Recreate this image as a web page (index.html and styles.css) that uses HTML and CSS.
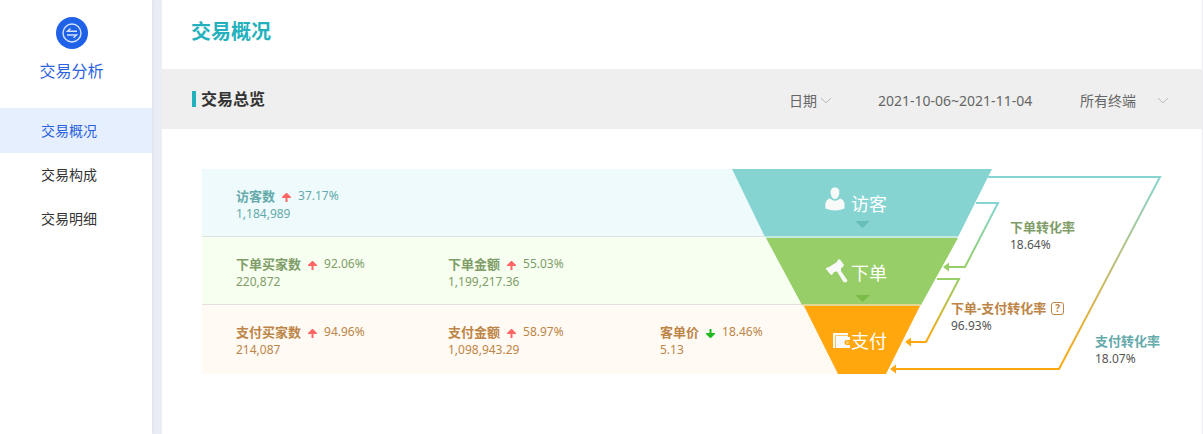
FILE: index.html
```html
<!DOCTYPE html>
<html lang="zh-CN">
<head>
  <meta charset="UTF-8">
  <meta name="viewport" content="width=device-width, initial-scale=1.0">
  <title>交易概况</title>
  <link rel="stylesheet" href="styles.css">
</head>
<body>
  <aside class="sidebar">
    <div class="brand">
      <svg class="brand-icon" viewBox="0 0 32 32" aria-hidden="true">
        <circle cx="16" cy="16" r="16" fill="#1f62e8"/>
        <g fill="none" stroke="#d5e2ff" stroke-width="1.4">
          <circle cx="16" cy="16" r="9"/>
          <path d="M21 14.300H11.500L14.500 11.500M11 18H20.500L17.500 20.800"/>
        </g>
      </svg>
      <span class="brand-name">交易分析</span>
    </div>
    <nav class="menu">
      <a href="#" class="active">交易概况</a>
      <a href="#">交易构成</a>
      <a href="#">交易明细</a>
    </nav>
  </aside>
  <main class="main">
    <header class="page-header">
      <h1>交易概况</h1>
    </header>
    <div class="toolbar">
      <h2>交易总览</h2>
      <div class="filters">
        <label class="picker picker-date">
          <select aria-label="日期"><option>日期</option></select>
          <svg class="chevron" viewBox="0 0 12 8" aria-hidden="true"><path d="M1 1l5 5 5-5"/></svg>
        </label>
        <input class="range" type="text" aria-label="日期范围" value="2021-10-06~2021-11-04">
        <label class="picker picker-device">
          <select aria-label="终端"><option>所有终端</option></select>
          <svg class="chevron" viewBox="0 0 12 8" aria-hidden="true"><path d="M1 1l5 5 5-5"/></svg>
        </label>
      </div>
    </div>
    <section class="overview">
      <svg class="defs" aria-hidden="true">
        <symbol id="up" viewBox="0 0 9 9"><path d="M4 0H5L9 4V5H5.500V9H3.500V5H0V4z"/></symbol>
        <symbol id="down" viewBox="0 0 9 9"><path d="M4 9H5L9 5V4H5.500V0H3.500V4H0V5z"/></symbol>
      </svg>
      <div class="rows">
        <div class="row row-visit">
          <div class="metric">
            <p><strong>访客数</strong><svg class="up"><use href="#up"/></svg>37.17%</p>
            <p>1,184,989</p>
          </div>
        </div>
        <div class="row row-order">
          <div class="metric">
            <p><strong>下单买家数</strong><svg class="up"><use href="#up"/></svg>92.06%</p>
            <p>220,872</p>
          </div>
          <div class="metric">
            <p><strong>下单金额</strong><svg class="up"><use href="#up"/></svg>55.03%</p>
            <p>1,199,217.36</p>
          </div>
        </div>
        <div class="row row-pay">
          <div class="metric">
            <p><strong>支付买家数</strong><svg class="up"><use href="#up"/></svg>94.96%</p>
            <p>214,087</p>
          </div>
          <div class="metric">
            <p><strong>支付金额</strong><svg class="up"><use href="#up"/></svg>58.97%</p>
            <p>1,098,943.29</p>
          </div>
          <div class="metric">
            <p><strong>客单价</strong><svg class="down"><use href="#down"/></svg>18.46%</p>
            <p>5.13</p>
          </div>
        </div>
      </div>
      <div class="funnel">
        <svg class="funnel-shape" viewBox="0 0 430 206" aria-hidden="true">
          <defs>
            <linearGradient id="g-order" gradientUnits="userSpaceOnUse" x1="0" y1="34" x2="0" y2="98">
              <stop offset="0" stop-color="#86d4d2"/><stop offset="1" stop-color="#97ce68"/>
            </linearGradient>
            <linearGradient id="g-order-pay" gradientUnits="userSpaceOnUse" x1="0" y1="110" x2="0" y2="173">
              <stop offset="0" stop-color="#97ce68"/><stop offset="1" stop-color="#ffa70d"/>
            </linearGradient>
            <linearGradient id="g-pay" gradientUnits="userSpaceOnUse" x1="0" y1="8" x2="0" y2="200">
              <stop offset="0" stop-color="#86d4d2"/><stop offset="1" stop-color="#ffa70d"/>
            </linearGradient>
          </defs>
          <path d="M0 0H260L226 68H33z" fill="#86d4d2"/>
          <path d="M34 69H226L189 136H70z" fill="#97ce68"/>
          <path d="M72 137H188L154 205H106z" fill="#ffa70d"/>
          <path d="M33 67H226L225 69H34z" fill="#c5e9e0"/>
          <path d="M70 135H190L188 137H71z" fill="#e3d68e"/>
          <!-- connectors -->
          <g fill="none" stroke-width="2">
            <path d="M244 34H266L233 98H217" stroke="url(#g-order)"/>
            <path d="M205 110H227L194 173H179" stroke="url(#g-order-pay)"/>
            <path d="M256 8H428L327 200H164" stroke="url(#g-pay)"/>
          </g>
          <path d="M211 98l6-4.500v9z" fill="#97ce68"/>
          <path d="M173 173l6-4.500v9z" fill="#ffa70d"/>
          <path d="M158 200l6-4.500v9z" fill="#ffa70d"/>
          <!-- stage marks -->
          <path d="M123 52h15l-7.500 7z" fill="#66bdba"/>
          <path d="M123 126h15l-7.500 7z" fill="#7bbb4a"/>
          <g fill="#f8fafa">
            <path d="M103 18.500c3 0 4.700 2 4.300 5.500c-.3 3.500-2 6-4.300 6s-4-2.500-4.300-6c-.4-3.500 1.300-5.500 4.300-5.500z"/>
            <path d="M98 29.500q5 4.500 10 0c4 1.200 5 4 4.500 10q-9.500 4-19 0c-.5-6 .5-8.800 4.500-10z"/>
            <!-- gavel -->
            <path d="M94 99L97 98L105 93L106 90.500L108 90.500L112 96L111 98L109 99L109 102L115.500 111.500L114 113.500L111.500 113L105 102.500L102 103L100 106L98 105L94 100z"/>
            <!-- wallet -->
            <path d="M101 164h15v4h2v3h-3a2.500 2.500 0 0 0 0 5h3v3h-17z"/>
            <circle cx="115.500" cy="173.500" r="1.500" fill="#ffd27d"/>
          </g>
          <path d="M103.500 179V166.500H116" fill="none" stroke="#ffc45c"/>
        </svg>
        <span class="stage stage-visit">访客</span>
        <span class="stage stage-order">下单</span>
        <span class="stage stage-pay">支付</span>
        <div class="rate rate-order"><strong>下单转化率</strong><span>18.64%</span></div>
        <div class="rate rate-order-pay"><strong>下单-支付转化率<button type="button" class="help" aria-label="说明">?</button></strong><span>96.93%</span></div>
        <div class="rate rate-pay"><strong>支付转化率</strong><span>18.07%</span></div>
      </div>
    </section>
  </main>
</body>
</html>
```
FILE: styles.css
```css
* { box-sizing: border-box; }
body { display: flex; min-height: 100vh; margin: 0; background: #eaeef4; color: #333; font-family: "Noto Sans", "Noto Sans CJK SC", sans-serif; font-size: 14px; }
h1, h2, p { margin: 0; }
a { color: #333; text-decoration: none; }
select, input, button { margin: 0; padding: 0; border: 0; background: none; color: inherit; font: inherit; }

.sidebar { flex: none; width: 152px; background: #fff; box-shadow: 0 0 4px #d5dbe4; }
.brand { display: flex; flex-direction: column; align-items: center; gap: 10px; height: 108px; padding: 17px 9px 0 0; color: #2b62e0; }
.brand-icon { width: 32px; height: 32px; }
.brand-name { font-size: 16px; line-height: 24px; }
.menu a { display: block; padding-left: 41px; line-height: 44px; }
.menu .active { padding-top: 1px; background: #e5effe; color: #2b62e0; }

.main { flex: 1; min-width: 0; margin: 0 1px 0 10px; background: #fff; }
.page-header { padding: 17px 29px 22px; }
h1 { color: #24b1bd; font-size: 20px; line-height: 30px; }
.toolbar { display: flex; align-items: center; justify-content: space-between; height: 60px; padding: 0 33px 0 30px; background: #efefef; }
h2 { padding-left: 5px; border-left: 4px solid #24b1bd; font-size: 16px; line-height: 16px; }
.filters { display: flex; align-items: center; padding-top: 3px; color: #666; }
.picker { display: flex; align-items: center; justify-content: space-between; }
.picker select { appearance: none; line-height: 20px; }
.picker-date { width: 43px; }
.picker-device { width: 89px; }
.range { width: 160px; margin: 0 42px 0 46px; line-height: 20px; }
.chevron { width: 12px; height: 8px; fill: none; stroke: #bbb; }

.overview { position: relative; padding: 40px; }
.defs { position: absolute; width: 0; height: 0; }
.rows { margin-right: 302px; font-size: 12px; line-height: 18px; }
.row { display: flex; height: 68px; padding: 18px 0 0 34px; border-bottom: 1px solid #e2e2e2; }
.row-visit { background: #eefafb; color: #65aaab; }
.row-order { background: #f7fff0; color: #7f9d68; }
.row-pay { height: 69px; border-bottom: 0; background: #fffaf4; color: #bd8547; }
.metric { flex: none; width: 212px; }
.metric:last-child { width: auto; }
.metric p { display: flex; align-items: center; height: 18px; }
.metric strong { font-size: 13px; }
.metric svg { width: 9px; height: 9px; margin: 2px 7px 0; }
.up { fill: #ff6666; }
.down { fill: #1fba1f; }

.funnel { position: absolute; top: 40px; right: 40px; width: 430px; height: 206px; }
.funnel-shape { display: block; width: 430px; height: 206px; }
.stage { position: absolute; left: 119px; color: #fff; font-size: 18px; line-height: 26px; }
.stage-visit { top: 22px; }
.stage-order { top: 91px; }
.stage-pay { top: 159px; }
.rate { position: absolute; color: #555; font-size: 12px; line-height: 18px; white-space: nowrap; }
.rate strong { display: flex; align-items: center; height: 18px; font-size: 13px; }
.rate span { display: block; }
.rate-order { top: 49px; left: 278px; }
.rate-order strong { color: #7f9d68; }
.rate-order-pay { top: 130px; left: 219px; }
.rate-order-pay strong { color: #bd8547; }
.rate-pay { top: 163px; left: 363px; }
.rate-pay strong { color: #65aaab; }
.help { width: 13px; height: 13px; margin-left: 5px; border: 1px solid #bd8547; border-radius: 3px; font-size: 10px; font-weight: bold; line-height: 10px; }
```
